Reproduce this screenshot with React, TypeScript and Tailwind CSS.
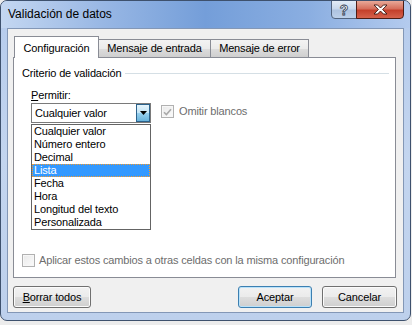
import React from "react";

const listItems = [
  "Cualquier valor",
  "Número entero",
  "Decimal",
  "Lista",
  "Fecha",
  "Hora",
  "Longitud del texto",
  "Personalizada",
];

function DisabledCheckbox({ checked }: { checked?: boolean }) {
  return (
    <span className="flex h-[13px] w-[13px] shrink-0 items-center justify-center border border-[#b1b1b1] bg-[linear-gradient(135deg,#e9e9e9,#fbfbfb)] shadow-[inset_0_0_0_1px_#f7f7f7]">
      {checked ? (
        <svg width="9" height="8" viewBox="0 0 9 8">
          <path d="M1 4.2 L3.4 6.6 L8 1.2" fill="none" stroke="#a9a9a9" strokeWidth="1.6" />
        </svg>
      ) : null}
    </span>
  );
}

function DialogButton({
  children,
  isDefault,
  className,
}: {
  children: React.ReactNode;
  isDefault?: boolean;
  className: string;
}) {
  return (
    <button
      className={
        "flex h-[22px] items-center justify-center rounded-[3px] border bg-[linear-gradient(180deg,#f2f2f2_0%,#ebebeb_50%,#dddddd_51%,#cfcfcf_100%)] leading-[13px] " +
        (isDefault
          ? "border-[#3c7fb1] shadow-[inset_0_0_0_1px_#b9e2fa] "
          : "border-[#707070] shadow-[inset_0_0_0_1px_#fbfbfb] ") +
        className
      }
    >
      {children}
    </button>
  );
}

export default function App() {
  return (
    <div className="h-[325px] w-[412px] bg-[#ececec] font-['Liberation_Sans',Arial,sans-serif] text-[11px] tracking-[-0.15px] text-black">
      <div className="flex h-[321px] w-[411px] flex-col overflow-hidden rounded-[7px] border border-[#3e516d] bg-[linear-gradient(180deg,#b5cbec_0%,#c3d5ef_50%,#bdd0ec_100%)] px-[6px] pb-[7px]">
        {/* title bar */}
        <div className="-mx-[6px] flex h-[27px] items-start justify-between bg-[linear-gradient(90deg,#c4d7f1_0%,#98b7e4_25%,#749ed9_50%,#8aaee1_75%,#b4cbee_100%)] px-[6px]">
          <span className="pt-[6px] pl-[1px] text-[12px] leading-[15px] tracking-normal text-black">Validación de datos</span>
          <div className="-mt-px flex">
            <div className="flex h-[19px] w-[26px] items-center justify-center rounded-bl-[4px] border border-[#52647f] bg-[linear-gradient(180deg,#e3ebf6_0%,#c9d8ec_45%,#aec3e0_55%,#bcd0ea_100%)]">
              <span className="text-[14px] leading-[14px] font-bold text-white [-webkit-text-stroke:0.8px_#2e3a4f]">?</span>
            </div>
            <div className="-ml-px flex h-[19px] w-[48px] items-center justify-center rounded-br-[4px] border border-[#4d1d15] bg-[linear-gradient(180deg,#e8a998_0%,#d56f5c_45%,#c4402b_55%,#d6624c_100%)]">
              <svg width="15" height="11" viewBox="0 0 15 11">
                <path
                  d="M1 1 L4.6 1 L7.5 4 L10.4 1 L14 1 L9.6 5.5 L14 10 L10.4 10 L7.5 7 L4.6 10 L1 10 L5.4 5.5 Z"
                  fill="#ffffff"
                  stroke="#3a1610"
                  strokeWidth="0.9"
                  strokeLinejoin="round"
                />
              </svg>
            </div>
          </div>
        </div>

        {/* client area */}
        <div className="flex flex-1 flex-col border border-[#8397b6] bg-[#f0f0f0] pt-[7px]">
          {/* tabs */}
          <div className="ml-[6px] flex h-[21px] items-end">
            <div className="relative z-10 -mb-px flex h-[22px] w-[85px] justify-center border border-b-0 border-[#898c95] bg-white pt-[5px] leading-[13px]">
              Configuración
            </div>
            <div className="-ml-px flex h-[18px] w-[113px] justify-center border border-b-0 border-[#898c95] bg-[linear-gradient(180deg,#f3f3f3_0%,#ebebeb_50%,#dddddd_51%,#cfcfcf_100%)] pt-[2px] leading-[13px]">
              Mensaje de entrada
            </div>
            <div className="-ml-px flex h-[18px] w-[99px] justify-center border border-b-0 border-[#898c95] bg-[linear-gradient(180deg,#f3f3f3_0%,#ebebeb_50%,#dddddd_51%,#cfcfcf_100%)] pt-[2px] leading-[13px]">
              Mensaje de error
            </div>
          </div>

          {/* panel */}
          <div className="ml-[5px] flex h-[221px] w-[383px] flex-col border border-[#898c95] bg-white pb-[10px]">
            <div className="mt-[9px] flex items-center pl-[8px]">
              <span className="leading-[13px]">Criterio de validación</span>
              <span className="mr-[6px] ml-[4px] h-px flex-1 bg-[#d5dfe5]" />
            </div>
            <div className="mt-[9px] pl-[17px] leading-[13px]">
              <span className="underline">P</span>ermitir:
            </div>
            <div className="mt-px flex items-start pl-[17px]">
              <div className="relative">
                <div className="flex h-[20px] w-[120px] items-stretch border border-[#7a7a7a] bg-white">
                  <span className="flex-1 pl-[3px] leading-[18px]">Cualquier valor</span>
                  <span className="flex w-[14px] items-center justify-center border border-[#2c628b] bg-[linear-gradient(180deg,#e5f4fc_0%,#c4e5f6_50%,#98d1ef_51%,#68b3db_100%)]">
                    <svg width="7" height="4" viewBox="0 0 7 4">
                      <path d="M0 0 L7 0 L3.5 4 Z" fill="#000000" />
                    </svg>
                  </span>
                </div>
                <div className="absolute top-[calc(100%+1px)] left-0 z-20 w-[120px] border border-[#646464] bg-white">
                  {listItems.map((item) => (
                    <div
                      key={item}
                      className={
                        item === "Lista"
                          ? "h-[13px] border border-dotted border-[#f59a2b] bg-[#3399ff] pl-px leading-[11px] text-white"
                          : "h-[13px] pl-[2px] leading-[13px]"
                      }
                    >
                      {item}
                    </div>
                  ))}
                </div>
              </div>
              <div className="mt-[2px] ml-[10px] flex items-center">
                <DisabledCheckbox checked />
                <span className="ml-[5px] leading-[13px] text-[#6d6d6d]">Omitir blancos</span>
              </div>
            </div>
            <div className="mt-auto flex items-center pl-[8px]">
              <DisabledCheckbox />
              <span className="ml-[4px] leading-[13px] text-[#6d6d6d]">
                Aplicar estos cambios a otras celdas con la misma configuración
              </span>
            </div>
          </div>

          {/* buttons */}
          <div className="mt-[8px] flex pr-[6px] pl-[5px]">
            <DialogButton className="w-[78px]">
              <span className="underline">B</span>orrar todos
            </DialogButton>
            <div className="flex-1" />
            <DialogButton isDefault className="w-[74px]">
              Aceptar
            </DialogButton>
            <DialogButton className="ml-[10px] w-[75px]">Cancelar</DialogButton>
          </div>
        </div>
      </div>
    </div>
  );
}
